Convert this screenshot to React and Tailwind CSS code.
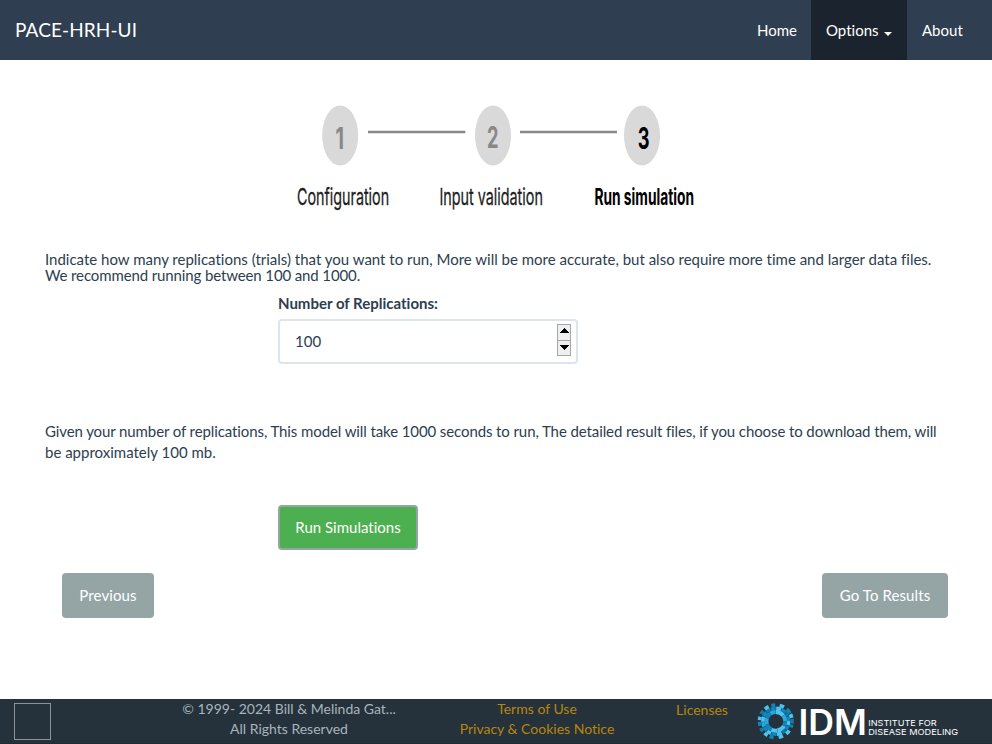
import React from 'react';

const sans = '"Inter", sans-serif';
const GEAR_BLUES = ['#4fc3ef', '#0e86bd', '#2aa7dc', '#1579a8'];

function Step({ cx, digitX, digitY, digitW, digit, label, labelX, labelW, active }) {
  return (
    <g fontFamily={sans}>
      <ellipse cx={cx} cy="45.5" rx="18" ry="30" fill="#d9d9d9" />
      <text x={digitX} y={digitY} fontSize="29.5" fontWeight="700" fill={active ? '#000' : '#888'} textLength={digitW} lengthAdjust="spacingAndGlyphs">{digit}</text>
      <text x={labelX} y="115.3" fontSize="23" fontWeight={active ? 700 : 400} fill={active ? '#000' : '#1c1c1c'} stroke={active ? 'none' : '#1c1c1c'} strokeWidth=".3" textLength={labelW} lengthAdjust="spacingAndGlyphs">{label}</text>
    </g>
  );
}

function Stepper() {
  return (
    <svg className="block h-[130px] w-[440px] overflow-visible" viewBox="0 0 440 130">
      <Step cx="60.2" digit="1" digitX="55.5" digitY="59.3" digitW="8.5" label="Configuration" labelX="17.1" labelW="92" />
      <path d="M88 42H185.3M240 42H337" stroke="#888" strokeWidth="2.5" />
      <Step cx="213" digit="2" digitX="207" digitY="57.7" digitW="11.5" label="Input validation" labelX="159.4" labelW="103.5" />
      <Step cx="362" digit="3" digitX="357.7" digitY="59.3" digitW="11.8" label="Run simulation" labelX="314.4" labelW="99.6" active />
    </svg>
  );
}

function arc(r, from, to) {
  const p = (a) => `${(19 + r * Math.cos((a * Math.PI) / 180)).toFixed(2)} ${(19 + r * Math.sin((a * Math.PI) / 180)).toFixed(2)}`;
  return `M${p(from)}A${r} ${r} 0 0 1 ${p(to)}`;
}

const RINGS = [
  [9.5, 4.2, [[-90, -38, 0], [-37, -2, 2], [-1, 28, 1], [29, 80, 0], [81, 118, 0], [119, 160, 1], [161, 200, 2], [201, 235, 1], [236, 269, 2]]],
  [13, 3.4, [[-88, -66, 0], [-64, -42, 1], [-41, -24, 3], [-22, -4, 1], [-3, 18, 0], [20, 40, 1], [42, 60, 3], [63, 86, 0], [88, 110, 1], [112, 132, 0], [134, 154, 1], [156, 176, 2], [178, 200, 0], [202, 224, 1], [226, 246, 3], [248, 270, 1]]],
  [16.3, 3.6, [[-76, -60, 0], [-48, -30, 1], [-26, -12, 0], [-8, 8, 3], [12, 22, 1], [34, 50, 0], [64, 80, 0], [98, 112, 1], [120, 134, 0], [142, 156, 3], [164, 178, 1], [184, 196, 0], [206, 220, 3], [228, 244, 0], [254, 268, 1]]],
];

function IdmLogo() {
  return (
    <svg className="block h-[40px] w-[204px] overflow-visible" viewBox="0 0 204 40">
      <g fill="none" transform="translate(-1.2 2.3)">
        {RINGS.map(([r, w, segs]) => segs.map(([a, b, c]) => (
          <path key={`${r}-${a}`} d={arc(r, a, b)} stroke={GEAR_BLUES[c]} strokeWidth={w} />
        )))}
      </g>
      <g fill="#fff" fontFamily={sans}>
        <text x="40.4" y="34.7" fontSize="36" fontWeight="600" textLength="68.5" lengthAdjust="spacingAndGlyphs">IDM</text>
        <text x="110.2" y="25.6" fontSize="8.2" textLength="68.5" lengthAdjust="spacingAndGlyphs">INSTITUTE FOR</text>
        <text x="110.2" y="34.8" fontSize="8.2" textLength="90" lengthAdjust="spacingAndGlyphs">DISEASE MODELING</text>
      </g>
    </svg>
  );
}

function Spinner() {
  return (
    <svg className="block h-[32px] w-[14px]" viewBox="0 0 14 32" shapeRendering="crispEdges">
      <rect x=".5" y=".5" width="13" height="16" fill="#efefef" stroke="#a6a6a6" />
      <rect x=".5" y="16.5" width="13" height="15" fill="#efefef" stroke="#a6a6a6" />
      <path d="M2 9L7 4L12 9ZM2 21L7 26L12 21Z" fill="#000" />
    </svg>
  );
}

export default function App() {
  return (
    <div className="flex h-[744px] w-[992px] flex-col overflow-hidden bg-white font-['Lato',sans-serif] text-[15px] leading-[21px] text-[#2c3e50] [font-variant-ligatures:none]">
      <nav className="flex h-[60px] shrink-0 items-stretch justify-between bg-[#2f3e50] text-white">
        <a className="pl-[15px] pt-[19px] text-[19px] tracking-[0.1px]">PACE-HRH-UI</a>
        <div className="flex">
          <a className="w-[69px] pl-[15px] pt-[20px]">Home</a>
          <a className="flex w-[96px] bg-[#1b242e] pl-[15px] pt-[20px]">
            Options
            <span className="ml-[5px] mt-[12px] h-0 w-0 border-x-4 border-t-4 border-x-transparent border-t-white" />
          </a>
          <a className="w-[85px] pl-[15px] pt-[20px]">About</a>
        </div>
      </nav>

      <main className="flex h-[639px] shrink-0 flex-col">
        <div className="pl-[280px] pt-[30px]"><Stepper /></div>
        <p className="ml-[45px] mt-[31px] whitespace-nowrap leading-[16px]">
          <span>Indicate how many replications (trials) that you want to run, More will be more accurate, but also require more time and larger data files.</span>
          <br />
          <span className="tracking-[-0.12px]">We recommend running between 100 and 1000.</span>
        </p>
        <label className="ml-[278px] mt-[10px] font-bold">Number of Replications:</label>
        <div className="ml-[278px] mt-[5px] flex h-[45px] w-[300px] items-center justify-between rounded border-2 border-[#dce4ec] pl-[15px] pr-[5px]">
          <span>100</span>
          <div className="pb-[3px]"><Spinner /></div>
        </div>
        <p className="ml-[45px] mt-[57px] whitespace-nowrap">
          <span className="tracking-[-0.1px]">Given your number of replications, This model will take 1000 seconds to run, The detailed result files, if you choose to download them, will</span>
          <br />
          be approximately 100 mb.
        </p>
        <button className="ml-[278px] mt-[42px] h-[45px] w-[140px] rounded border-2 border-[#95a5a6] bg-[#4caf50] text-white">Run Simulations</button>
        <div className="mt-[23px] flex justify-between pl-[62px] pr-[44px] text-white">
          <button className="h-[45px] w-[92px] rounded bg-[#95a5a6] tracking-[0.1px]">Previous</button>
          <button className="h-[45px] w-[126px] rounded bg-[#95a5a6] tracking-[0.1px]">Go To Results</button>
        </div>
      </main>

      <footer className="flex h-[45px] shrink-0 border-b border-[#1f2a32] bg-[#25323b] text-[14px] leading-[20px] text-[#a9b4bd]">
        <div className="ml-[14px] mt-[4px] h-[37px] w-[37px] border border-[#8c9498]" />
        <div className="ml-[119px] w-[238px] text-center">
          © 1999- 2024 Bill &amp; Melinda Gat...
          <br />
          All Rights Reserved
        </div>
        <div className="ml-[29px] w-[200px] text-center text-[#b8860b]">
          Terms of Use
          <br />
          Privacy &amp; Cookies Notice
        </div>
        <div className="ml-[25px] w-[80px] pt-px text-center text-[#b8860b]">Licenses</div>
        <div className="ml-[16px] mt-px"><IdmLogo /></div>
      </footer>
    </div>
  );
}
